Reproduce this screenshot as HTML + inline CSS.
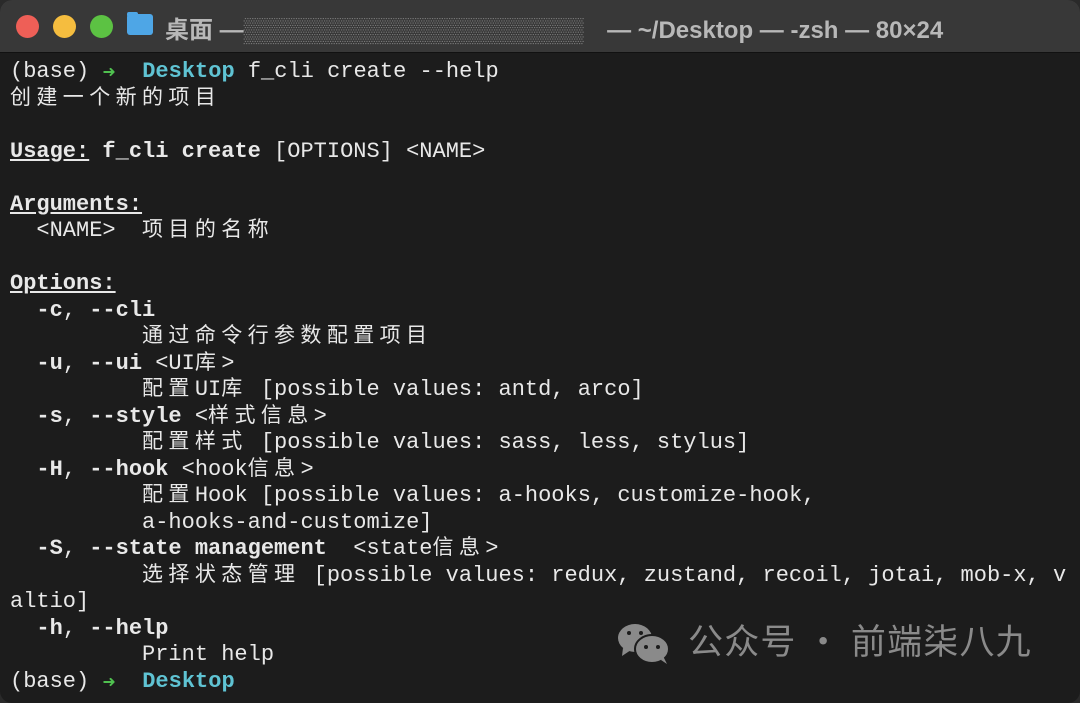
<!DOCTYPE html>
<html><head><meta charset="utf-8"><style>
html,body{margin:0;padding:0;width:1080px;height:703px;overflow:hidden;background:#2a2a2a}
.win{position:absolute;left:0;top:0;width:1080px;height:703px;background:#1c1c1c;border-radius:12px;overflow:hidden}
.bar{position:absolute;left:0;top:0;width:1080px;height:52px;background:#383838;border-bottom:1px solid #111}
.dot{position:absolute;top:15px;width:23px;height:23px;border-radius:50%}
.title{position:absolute;left:165px;top:10px;font:bold 24px "Liberation Sans","Noto Sans CJK SC",sans-serif;color:#b8b8b8;white-space:pre}
.term{position:absolute;left:10px;top:59px;font:22px "Liberation Mono","Noto Sans CJK SC",monospace;color:#e8e8e8}
.term div{height:26.5px;line-height:26.5px;white-space:pre}
.c{font-family:"Noto Sans CJK SC",sans-serif;letter-spacing:5.4px;font-size:21px;line-height:1}
b{font-weight:bold}
.u{text-decoration:underline;font-weight:bold}
.cy{color:#5fc3d3;font-weight:bold}
.g{color:#4fc04f;font-weight:bold;font-family:"DejaVu Sans",sans-serif;font-size:16px;line-height:1}
.wm{position:absolute;left:688px;top:619px;font:35px "Noto Sans CJK SC",sans-serif;color:#8a8a8a;letter-spacing:1.2px;line-height:1.2}
</style></head><body>
<div class="win">
<div class="bar">
<div class="dot" style="left:16px;background:#ee5f57"></div>
<div class="dot" style="left:53px;background:#f5bd3f"></div>
<div class="dot" style="left:90px;background:#5cc243"></div>
<div style="position:absolute;left:127px;top:14px;width:26px;height:21px;background:#4ea6e6;border-radius:3px"></div>
<div style="position:absolute;left:127px;top:12px;width:11px;height:5px;background:#4ea6e6;border-radius:2px"></div>
<div class="title">桌面 —<span style="color:#777;padding-right:10px">▒▒▒▒▒▒▒▒▒▒▒▒▒▒▒▒▒▒▒▒</span>  — ~/Desktop — -zsh — 80×24</div>
</div>
<div class="term"><div>(base) <span class="g">➜</span>  <span class="cy">Desktop</span> f_cli create --help</div><div><span class="c">创建一个新的项目</span></div><div> </div><div><span class="u">Usage:</span> <b>f_cli create</b> [OPTIONS] &lt;NAME&gt;</div><div> </div><div><span class="u">Arguments:</span></div><div>  &lt;NAME&gt;  <span class="c">项目的名称</span></div><div> </div><div><span class="u">Options:</span></div><div>  <b>-c</b>, <b>--cli</b></div><div>          <span class="c">通过命令行参数配置项目</span></div><div>  <b>-u</b>, <b>--ui</b> &lt;UI<span class="c">库</span>&gt;</div><div>          <span class="c">配置</span>UI<span class="c">库</span> [possible values: antd, arco]</div><div>  <b>-s</b>, <b>--style</b> &lt;<span class="c">样式信息</span>&gt;</div><div>          <span class="c">配置样式</span> [possible values: sass, less, stylus]</div><div>  <b>-H</b>, <b>--hook</b> &lt;hook<span class="c">信息</span>&gt;</div><div>          <span class="c">配置</span>Hook [possible values: a-hooks, customize-hook,</div><div>          a-hooks-and-customize]</div><div>  <b>-S</b>, <b>--state management</b>  &lt;state<span class="c">信息</span>&gt;</div><div>          <span class="c">选择状态管理</span> [possible values: redux, zustand, recoil, jotai, mob-x, v</div><div>altio]</div><div>  <b>-h</b>, <b>--help</b></div><div>          Print help</div><div>(base) <span class="g">➜</span>  <span class="cy">Desktop</span></div></div>
<svg style="position:absolute;left:617px;top:622px" width="53" height="42" viewBox="0 0 53 42">
<ellipse cx="18" cy="16" rx="17" ry="14" fill="#8a8a8a"/>
<path d="M6 26 L5 34 L14 28Z" fill="#8a8a8a"/>
<ellipse cx="35" cy="27" rx="17" ry="14" fill="#8a8a8a" stroke="#1c1c1c" stroke-width="2"/>
<path d="M44 38 L50 42 L46 34Z" fill="#8a8a8a"/>
<circle cx="12" cy="11" r="2" fill="#1c1c1c"/><circle cx="24" cy="11" r="2" fill="#1c1c1c"/>
<circle cx="29" cy="25" r="2" fill="#1c1c1c"/><circle cx="41" cy="25" r="2" fill="#1c1c1c"/>
</svg>
<div class="wm">公众号 · 前端柒八九</div>
</div>
</body></html>
